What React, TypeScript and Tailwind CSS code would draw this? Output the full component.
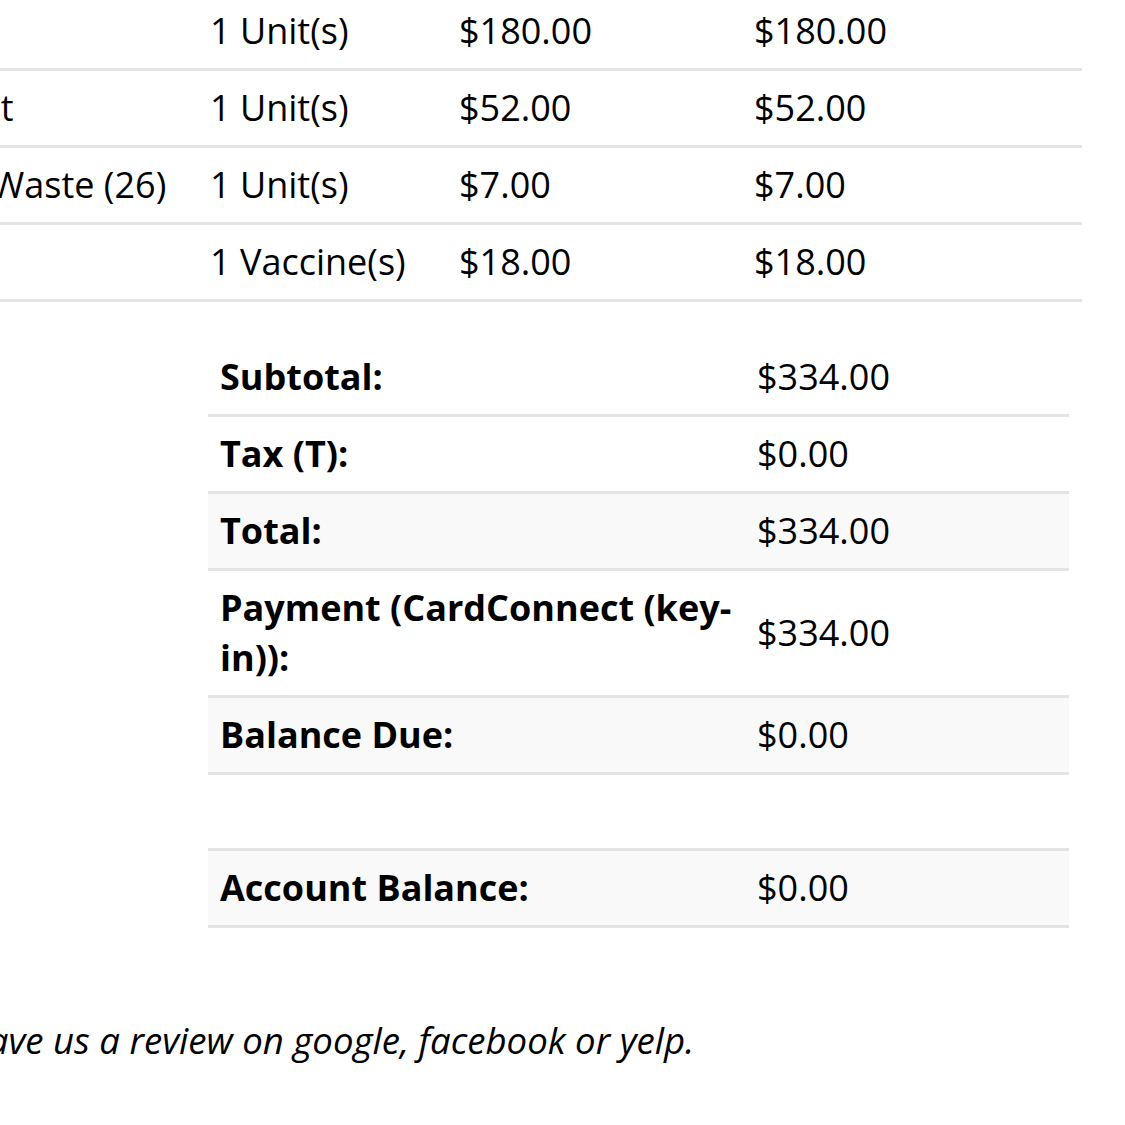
const items = [
  { desc: 'Surgery', qty: '1 Unit(s)', price: '$180.00', total: '$180.00' },
  { desc: 'Wellness Kit', qty: '1 Unit(s)', price: '$52.00', total: '$52.00' },
  { desc: 'Biohazard Waste (26)', qty: '1 Unit(s)', price: '$7.00', total: '$7.00' },
  { desc: 'Rabies', qty: '1 Vaccine(s)', price: '$18.00', total: '$18.00' },
];

const totals = [
  { label: 'Subtotal:', value: '$334.00', shaded: false },
  { label: 'Tax (T):', value: '$0.00', shaded: false },
  { label: 'Total:', value: '$334.00', shaded: true },
  { label: 'Payment (CardConnect (key-in)):', value: '$334.00', shaded: false },
  { label: 'Balance Due:', value: '$0.00', shaded: true },
];

export default function App() {
  return (
    <div className="w-[1125px] h-[1125px] overflow-hidden bg-white text-black text-[36px] leading-[50px] font-['Open_Sans',sans-serif]">
      {/* line items */}
      <div className="-mt-[6px] -ml-[200px] w-[1282px]">
        {items.map((it) => (
          <div
            key={it.desc}
            className="grid grid-cols-[398px_249px_295px_1fr] border-b-[3px] border-[#e4e4e4]"
          >
            <div className="px-3 py-3 whitespace-nowrap">{it.desc}</div>
            <div className="px-3 py-3 whitespace-nowrap">{it.qty}</div>
            <div className="px-3 py-3">{it.price}</div>
            <div className="px-3 py-3">{it.total}</div>
          </div>
        ))}
      </div>

      {/* totals */}
      <div className="mt-[38px] ml-[208px] w-[861px]">
        {totals.map((t) => (
          <div
            key={t.label}
            className={`grid grid-cols-[537px_1fr] items-center border-b-[3px] border-[#e4e4e4] ${
              t.shaded ? 'bg-[#f9f9f9]' : ''
            }`}
          >
            <div className="px-3 py-3 font-bold">{t.label}</div>
            <div className="px-3 py-3">{t.value}</div>
          </div>
        ))}
        <div className="h-[73px]" />
        <div className="grid grid-cols-[537px_1fr] items-center border-y-[3px] border-[#e4e4e4] bg-[#f9f9f9]">
          <div className="px-3 py-3 font-bold">Account Balance:</div>
          <div className="px-3 py-3">$0.00</div>
        </div>
      </div>

      <p className="mt-[87px] -ml-[152px] italic text-[36.6px] whitespace-nowrap">
        Please leave us a review on google, facebook or yelp.
      </p>
    </div>
  );
}
